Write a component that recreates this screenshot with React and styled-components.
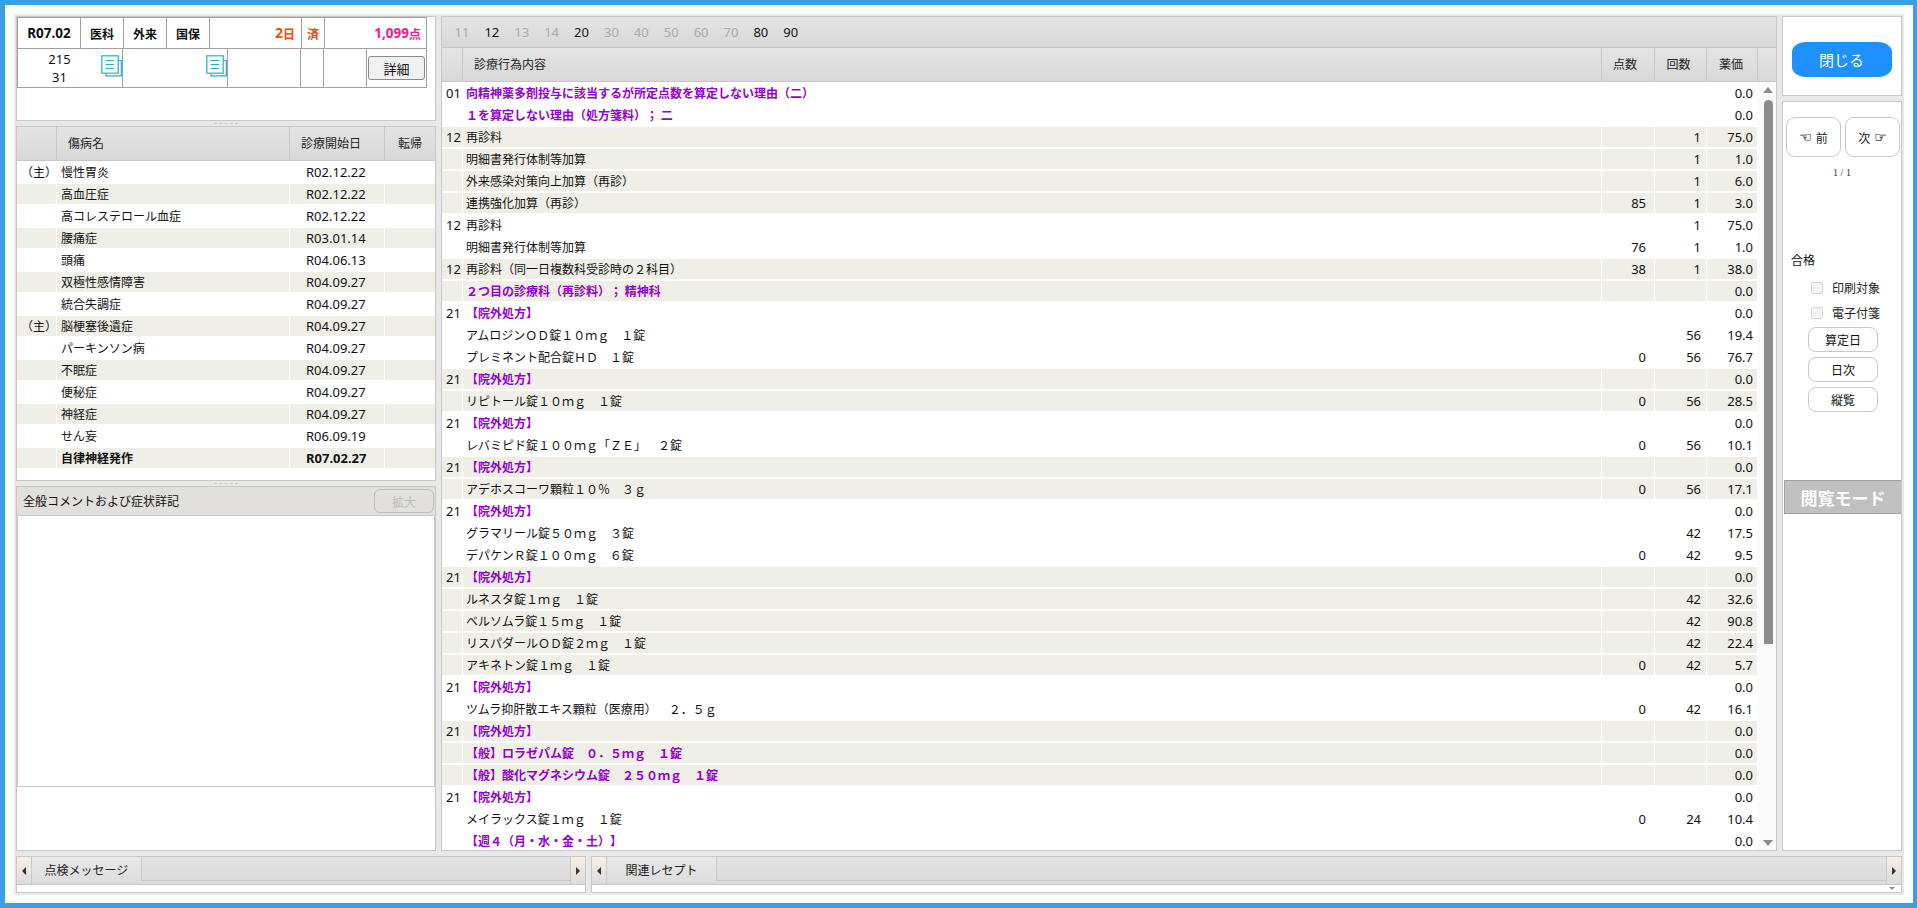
import React from "react";
import styled, { createGlobalStyle } from "styled-components";

const CJK = `"Noto Sans CJK JP", "Noto Sans", sans-serif`;
const LAT = `"Noto Sans", "Noto Sans CJK JP", sans-serif`;
const SHADE = "#efefe7";
const LINE = "#c8c8c8";
const HEAD = "linear-gradient(#e4e4e4, #d8d8d8)";

const Global = createGlobalStyle`
  html, body { margin: 0; padding: 0; background: #fff; overflow: hidden; }
  * { box-sizing: border-box; }
  body { font-family: ${CJK}; font-size: 12px; color: #111; text-spacing-trim: space-all; }
`;

const Frame = styled.div`
  width: 1917px; height: 908px;
  border: 5px solid #3b9fe3; border-right-width: 4px;
  padding: 9px;
`;
const Canvas = styled.div`
  height: 881px; width: 1890px;
  background: #e8e8e8; padding: 2px;
  display: flex; flex-direction: column; gap: 5px;
`;
const Main = styled.div`
  display: flex; height: 835px; gap: 5px;
`;
const LeftCol = styled.div`
  width: 420px; display: flex; flex-direction: column;
`;
const Panel = styled.section`
  background: #fff; border: 1px solid ${LINE};
  display: flex; flex-direction: column; overflow: hidden;
  height: ${(p) => (p.$h ? p.$h + "px" : "auto")};
  flex: ${(p) => (p.$h ? "none" : 1)};
`;
const Grip = styled.div`
  height: 5px; flex: none; display: flex; align-items: center; justify-content: center;
  &::before { content: ""; width: 24px; border-top: 1px dashed #c4c4c4; }
`;

/* summary */
const Summary = styled.div`
  margin: 0; width: 410px; border: 1px solid #a0a0a0; border-width: 1px 1px 0;
`;
const SumRow = styled.div`
  display: grid; grid-template-columns: ${(p) => p.$cols};
  height: ${(p) => p.$h}px; border-bottom: 1px solid #a0a0a0;
`;
const SumCell = styled.div`
  display: flex; align-items: center;
  justify-content: ${(p) => p.$align || "center"};
  border-right: 1px solid #a0a0a0;
  padding-right: ${(p) => p.$pr || 0}px;
  font-weight: ${(p) => (p.$bold ? 700 : 400)};
  font-size: 12px;
  color: ${(p) => p.$color || "#111"};
  &:last-child { border-right: 0; }
`;
const Lat = styled.span`font-family: ${LAT}; font-size: 13.5px;`;
const Stack = styled.div`
  width: 84px; text-align: center; font-family: ${LAT}; font-size: 13px; line-height: 18px;
`;
const Detail = styled.button`
  width: 57px; height: 24px; padding: 0; background: #f0f0f0;
  border: 1px solid #8a8a8a; border-radius: 3px; font: 13px ${CJK}; color: #111;
`;
const CopySvg = styled.svg`
  width: 21px; height: 22px; flex: none; margin-bottom: 4px;
`;
const CopyIcon = () => (
  <CopySvg viewBox="0 0 21 22" fill="none" stroke="#27aec6" strokeWidth="1.2">
    <path d="M5 18.5V20.8H20.3V5.5H17.5" />
    <rect x="0.8" y="0.8" width="16.4" height="17.4" fill="#fff" />
    <path d="M4.5 5.5H13M4.5 9.5H13M4.5 13.5H13" />
  </CopySvg>
);

/* tables */
const HeadRow = styled.div`
  display: grid; grid-template-columns: ${(p) => p.$cols};
  height: ${(p) => p.$h}px; flex: none; background: ${HEAD};
  border-bottom: 1px solid ${LINE};
`;
const HeadCell = styled.div`
  display: flex; align-items: center;
  justify-content: ${(p) => p.$align || "center"};
  padding-left: ${(p) => p.$pl || 0}px;
  padding-right: ${(p) => p.$pr || 0}px;
  padding-bottom: 2px;
  border-right: 1px solid ${LINE}; color: #222; font-size: 12px;
  &:last-child { border-right: 0; }
`;
const DisRow = styled.div`
  display: grid; grid-template-columns: 39px 232px 94px 50px;
  column-gap: 1px; height: 22px; padding: 1px 0; flex: none; width: 418px;
`;
const Cell = styled.div`
  height: 20px; line-height: 20px; white-space: nowrap;
  background: ${(p) => (p.$shade ? SHADE : "transparent")};
  padding-left: ${(p) => p.$pl || 0}px;
  font-weight: ${(p) => (p.$bold ? 700 : 400)};
  color: ${(p) => (p.$purple ? "#9400d3" : "#111")};
`;
const DateCell = styled(Cell)`
  font-family: ${LAT}; font-size: 13px;
`;
const CommentHead = styled.div`
  height: 29px; flex: none; background: #e1e0dc; border-bottom: 1px solid ${LINE};
  display: flex; align-items: center; justify-content: space-between;
  padding: 0 1px 0 6px;
`;
const CommentTitle = styled.span`
  margin-top: -2px;
`;
const Expand = styled.button`
  width: 60px; height: 24px; background: #e1e0dc; color: #bbb; padding: 0;
  border: 1px solid #bdbdbd; border-radius: 6px; font: 12px ${CJK};
`;
const CommentBox = styled.div`
  height: 271px; flex: none; border: 1px solid ${LINE}; border-top: 0; margin: 0;
`;

/* center */
const Center = styled(Panel)`
  flex: none; width: 1336px;
`;
const NumTabs = styled.div`
  height: 31px; flex: none; display: flex; align-items: center; padding-left: 5px;
  background: ${HEAD}; border-bottom: 1px solid ${LINE};
`;
const NumTab = styled.span`
  width: 29.9px; text-align: center; font-family: ${LAT}; font-size: 13px;
  color: ${(p) => (p.$on ? "#111" : "#aaa")};
`;
const CenterBody = styled.div`
  flex: 1; display: flex; min-height: 0;
`;
const Rows = styled.div`
  width: 1316px; overflow: hidden;
`;
const TreatRow = styled.div`
  display: grid; grid-template-columns: 20px 1138px 52px 51px 51px;
  column-gap: 1px; height: 22px; padding: 1px 0;
`;
const Code = styled(Cell)`
  font-family: ${LAT}; font-size: 13px; padding-left: 4px;
`;
const Num = styled(Cell)`
  font-family: ${LAT}; font-size: 13px; text-align: right; padding-right: ${(p) => p.$pr}px;
`;
const Scrollbar = styled.div`
  width: 19px; background: #fbfbfb; display: flex; flex-direction: column;
  align-items: center; padding: 5px 0 4px 3px;
`;
const Tri = styled.i`
  display: block; width: 0; height: 0; flex: none;
  border-left: ${(p) => p.$s || 5}px solid transparent;
  border-right: ${(p) => p.$s || 5}px solid transparent;
  ${(p) => (p.$down ? "border-top" : "border-bottom")}: ${(p) => p.$s || 6}px solid #8c8c8c;
`;
const Thumb = styled.div`
  width: 9px; height: 544px; flex: none; margin-top: 7px; background: #8c8c8c; border-radius: 5px 5px 0 0;
`;
const Spacer = styled.div`flex: 1;`;

/* right */
const RightCol = styled.div`
  width: 120px; display: flex; flex-direction: column; gap: 5px;
`;
const CloseWrap = styled(Panel)`
  align-items: center; justify-content: center; padding-top: 7px; padding-right: 1px;
`;
const CloseBtn = styled.button`
  width: 100px; height: 35px; background: #1e90ff; color: #fff; border: 0;
  border-radius: 14px / 10px; font: 15px ${CJK}; padding: 0;
`;
const Side = styled(Panel)`
  padding: 15px 1px 0 3px;
`;
const NavRow = styled.div`
  display: flex; gap: 4px;
`;
const NavBtn = styled.button`
  width: 55px; height: 40px; background: #fff; border: 1px solid ${LINE};
  border-radius: 9px; padding: 0; color: #222;
  font: 12px ${CJK}; white-space: nowrap;
  display: flex; align-items: center; justify-content: center; gap: 4px;
`;
const Hand = styled.span`
  font: 14px "DejaVu Sans", sans-serif; color: #111; -webkit-text-stroke: 0.15px #111;
`;
const Pager = styled.div`
  margin-top: 10px; text-align: center; font: 10px "Liberation Serif", serif; color: #333; height: 12px; padding-right: 2px;
`;
const Pass = styled.div`
  margin-top: 73px; padding-left: 5px; line-height: 16px;
`;
const Check = styled.label`
  display: flex; align-items: center; gap: 9px; height: 25px; padding-left: 25px;
  margin-top: ${(p) => p.$mt || 0}px; color: #222;
`;
const Box = styled.span`
  width: 12px; height: 12px; background: #f4f4f4; border: 1px solid #d8d8d8; border-radius: 2px; flex: none;
`;
const SmallBtns = styled.div`
  display: flex; flex-direction: column; gap: 5px; margin: 2px 0 0 22px;
`;
const SmallBtn = styled.button`
  width: 70px; height: 25px; background: #fff; border: 1px solid ${LINE}; border-radius: 8px;
  font: 12px ${CJK}; color: #111; padding: 0;
`;
const Mode = styled.div`
  margin: 68px -1px 0 -2px; height: 34px; background: #c0c0c0; border: 1px solid #a0a0a0; border-right: 0;
  color: #fff; font-weight: 700; font-size: 17px; display: flex; align-items: center; justify-content: center;
`;

/* bottom */
const Bottom = styled.div`
  display: flex; gap: 5px; height: 37px;
`;
const TabPane = styled.div`
  width: ${(p) => p.$w}px; background: #fff; border: 1px solid ${LINE};
  display: flex; flex-direction: column;
`;
const TabBar = styled.div`
  height: 28px; flex: none; display: flex; background: linear-gradient(#e4e4e4, #d8d8d8);
  border-bottom: 1px solid ${LINE}; box-shadow: inset 0 -5px 0 #dcdcdc;
`;
const ArrowBtn = styled.div`
  width: ${(p) => p.$w}px; flex: none; display: flex; align-items: center; justify-content: center;
  background: linear-gradient(#fbeee6, #dcdcdc);
  border-${(p) => (p.$right ? "left" : "right")}: 1px solid ${LINE};
`;
const Side3 = styled.i`
  display: block; width: 0; height: 0;
  border-top: 4px solid transparent; border-bottom: 4px solid transparent;
  ${(p) => (p.$right ? "border-left" : "border-right")}: 4px solid #333;
`;
const Tab = styled.div`
  width: 110px; height: 24px; flex: none; display: flex; align-items: center; justify-content: center;
  background: linear-gradient(#e8e8e8, #dedede); border-right: 1px solid ${LINE};
  color: #222; font-size: 12px; box-shadow: 0 1px 0 #dedede; position: relative;
`;
const TabFill = styled.div`
  flex: 1; height: 24px; border-bottom: 1px solid ${LINE};
`;
const TabBody = styled.div`
  flex: 1; display: flex; justify-content: flex-end; align-items: center; padding-right: 6px;
`;

const disease = [
  ["（主）", "慢性胃炎", "R02.12.22"],
  ["", "高血圧症", "R02.12.22"],
  ["", "高コレステロール血症", "R02.12.22"],
  ["", "腰痛症", "R03.01.14"],
  ["", "頭痛", "R04.06.13"],
  ["", "双極性感情障害", "R04.09.27"],
  ["", "統合失調症", "R04.09.27"],
  ["（主）", "脳梗塞後遺症", "R04.09.27"],
  ["", "パーキンソン病", "R04.09.27"],
  ["", "不眠症", "R04.09.27"],
  ["", "便秘症", "R04.09.27"],
  ["", "神経症", "R04.09.27"],
  ["", "せん妄", "R06.09.19"],
  ["", "自律神経発作", "R07.02.27", true],
];

const G = "【院外処方】";
/* code, text, points, count, price, shaded, purple */
const rows = [
  ["01", "向精神薬多剤投与に該当するが所定点数を算定しない理由（二）", "", "", "0.0", 0, 1],
  ["", "１を算定しない理由（処方箋料）； 二", "", "", "0.0", 0, 1],
  ["12", "再診料", "", "1", "75.0", 1],
  ["", "明細書発行体制等加算", "", "1", "1.0", 1],
  ["", "外来感染対策向上加算（再診）", "", "1", "6.0", 1],
  ["", "連携強化加算（再診）", "85", "1", "3.0", 1],
  ["12", "再診料", "", "1", "75.0", 0],
  ["", "明細書発行体制等加算", "76", "1", "1.0", 0],
  ["12", "再診料（同一日複数科受診時の２科目）", "38", "1", "38.0", 1],
  ["", "２つ目の診療科（再診料）； 精神科", "", "", "0.0", 1, 1],
  ["21", G, "", "", "0.0", 0, 1],
  ["", "アムロジンＯＤ錠１０ｍｇ　１錠", "", "56", "19.4", 0],
  ["", "プレミネント配合錠ＨＤ　１錠", "0", "56", "76.7", 0],
  ["21", G, "", "", "0.0", 1, 1],
  ["", "リピトール錠１０ｍｇ　１錠", "0", "56", "28.5", 1],
  ["21", G, "", "", "0.0", 0, 1],
  ["", "レバミピド錠１００ｍｇ「ＺＥ」　２錠", "0", "56", "10.1", 0],
  ["21", G, "", "", "0.0", 1, 1],
  ["", "アデホスコーワ顆粒１０％　３ｇ", "0", "56", "17.1", 1],
  ["21", G, "", "", "0.0", 0, 1],
  ["", "グラマリール錠５０ｍｇ　３錠", "", "42", "17.5", 0],
  ["", "デパケンＲ錠１００ｍｇ　６錠", "0", "42", "9.5", 0],
  ["21", G, "", "", "0.0", 1, 1],
  ["", "ルネスタ錠１ｍｇ　１錠", "", "42", "32.6", 1],
  ["", "ベルソムラ錠１５ｍｇ　１錠", "", "42", "90.8", 1],
  ["", "リスパダールＯＤ錠２ｍｇ　１錠", "", "42", "22.4", 1],
  ["", "アキネトン錠１ｍｇ　１錠", "0", "42", "5.7", 1],
  ["21", G, "", "", "0.0", 0, 1],
  ["", "ツムラ抑肝散エキス顆粒（医療用）　２．５ｇ", "0", "42", "16.1", 0],
  ["21", G, "", "", "0.0", 1, 1],
  ["", "【般】ロラゼパム錠　０．５ｍｇ　１錠", "", "", "0.0", 1, 1],
  ["", "【般】酸化マグネシウム錠　２５０ｍｇ　１錠", "", "", "0.0", 1, 1],
  ["21", G, "", "", "0.0", 0, 1],
  ["", "メイラックス錠１ｍｇ　１錠", "0", "24", "10.4", 0],
  ["", "【週４（月・水・金・土）】", "", "", "0.0", 0, 1],
];

const tabs = [["11"], ["12", 1], ["13"], ["14"], ["20", 1], ["30"], ["40"], ["50"], ["60"], ["70"], ["80", 1], ["90", 1]];

export default function App() {
  return (
    <Frame>
      <Global />
      <Canvas>
        <Main>
          <LeftCol>
            <Panel $h={105}>
              <Summary>
                <SumRow $cols="63px 43px 43px 43px 92px 23px 1fr" $h={31}>
                  <SumCell $bold><Lat>R07.02</Lat></SumCell>
                  <SumCell $bold>医科</SumCell>
                  <SumCell $bold>外来</SumCell>
                  <SumCell $bold>国保</SumCell>
                  <SumCell $bold $align="flex-end" $pr={6} $color="#ff4500"><Lat>2</Lat>日</SumCell>
                  <SumCell $bold $color="#ff4500">済</SumCell>
                  <SumCell $bold $align="flex-end" $pr={5} $color="#ff1493"><Lat>1,099</Lat>点</SumCell>
                </SumRow>
                <SumRow $cols="105px 105px 73px 23px 43px 1fr" $h={39}>
                  <SumCell $align="flex-start">
                    <Stack>215<br />31</Stack>
                    <CopyIcon />
                  </SumCell>
                  <SumCell $align="flex-end"><CopyIcon /></SumCell>
                  <SumCell />
                  <SumCell />
                  <SumCell />
                  <SumCell><Detail>詳細</Detail></SumCell>
                </SumRow>
              </Summary>
            </Panel>
            <Grip />
            <Panel $h={355}>
              <HeadRow $cols="40px 233px 95px 1fr" $h={34}>
                <HeadCell />
                <HeadCell $align="flex-start" $pl={11}>傷病名</HeadCell>
                <HeadCell $pr={12}>診療開始日</HeadCell>
                <HeadCell>転帰</HeadCell>
              </HeadRow>
              {disease.map((d, i) => {
                const s = i % 2 === 1;
                return (
                  <DisRow key={i}>
                    <Cell $shade={s} $pl={4}>{d[0]}</Cell>
                    <Cell $shade={s} $pl={4} $bold={d[3]}>{d[1]}</Cell>
                    <DateCell $shade={s} $pl={16} $bold={d[3]}>{d[2]}</DateCell>
                    <Cell $shade={s} />
                  </DisRow>
                );
              })}
            </Panel>
            <Grip />
            <Panel>
              <CommentHead>
                <CommentTitle>全般コメントおよび症状詳記</CommentTitle>
                <Expand>拡大</Expand>
              </CommentHead>
              <CommentBox />
            </Panel>
          </LeftCol>

          <Center>
            <NumTabs>
              {tabs.map(([t, on]) => <NumTab key={t} $on={on}>{t}</NumTab>)}
            </NumTabs>
            <HeadRow $cols="21px 1139px 53px 52px 51px 1fr" $h={34}>
              <HeadCell />
              <HeadCell $align="flex-start" $pl={11}>診療行為内容</HeadCell>
              <HeadCell $pr={6}>点数</HeadCell>
              <HeadCell $pr={4}>回数</HeadCell>
              <HeadCell $pr={2}>薬価</HeadCell>
              <HeadCell />
            </HeadRow>
            <CenterBody>
              <Rows>
                {rows.map((r, i) => {
                  const s = !!r[5];
                  return (
                    <TreatRow key={i}>
                      <Code $shade={s}>{r[0]}</Code>
                      <Cell $shade={s} $pl={3} $purple={r[6]} $bold={r[6]}>{r[1]}</Cell>
                      <Num $shade={s} $pr={8}>{r[2]}</Num>
                      <Num $shade={s} $pr={5}>{r[3]}</Num>
                      <Num $shade={s} $pr={5}>{r[4]}</Num>
                    </TreatRow>
                  );
                })}
              </Rows>
              <Scrollbar>
                <Tri />
                <Thumb />
                <Spacer />
                <Tri $down />
              </Scrollbar>
            </CenterBody>
          </Center>

          <RightCol>
            <CloseWrap $h={80}>
              <CloseBtn>閉じる</CloseBtn>
            </CloseWrap>
            <Side>
              <NavRow>
                <NavBtn><Hand>☜</Hand>前</NavBtn>
                <NavBtn>次<Hand>☞</Hand></NavBtn>
              </NavRow>
              <Pager>1 / 1</Pager>
              <Pass>合格</Pass>
              <Check $mt={7}><Box />印刷対象</Check>
              <Check><Box />電子付箋</Check>
              <SmallBtns>
                <SmallBtn>算定日</SmallBtn>
                <SmallBtn>日次</SmallBtn>
                <SmallBtn>縦覧</SmallBtn>
              </SmallBtns>
              <Mode>閲覧モード</Mode>
            </Side>
          </RightCol>
        </Main>

        <Bottom>
          <TabPane $w={570}>
            <TabBar>
              <ArrowBtn $w={15}><Side3 /></ArrowBtn>
              <Tab>点検メッセージ</Tab>
              <TabFill />
              <ArrowBtn $w={15} $right><Side3 $right /></ArrowBtn>
            </TabBar>
          </TabPane>
          <TabPane $w={1311}>
            <TabBar>
              <ArrowBtn $w={15}><Side3 /></ArrowBtn>
              <Tab>関連レセプト</Tab>
              <TabFill />
              <ArrowBtn $w={15} $right><Side3 $right /></ArrowBtn>
            </TabBar>
            <TabBody><Tri $down $s={3} /></TabBody>
          </TabPane>
        </Bottom>
      </Canvas>
    </Frame>
  );
}
